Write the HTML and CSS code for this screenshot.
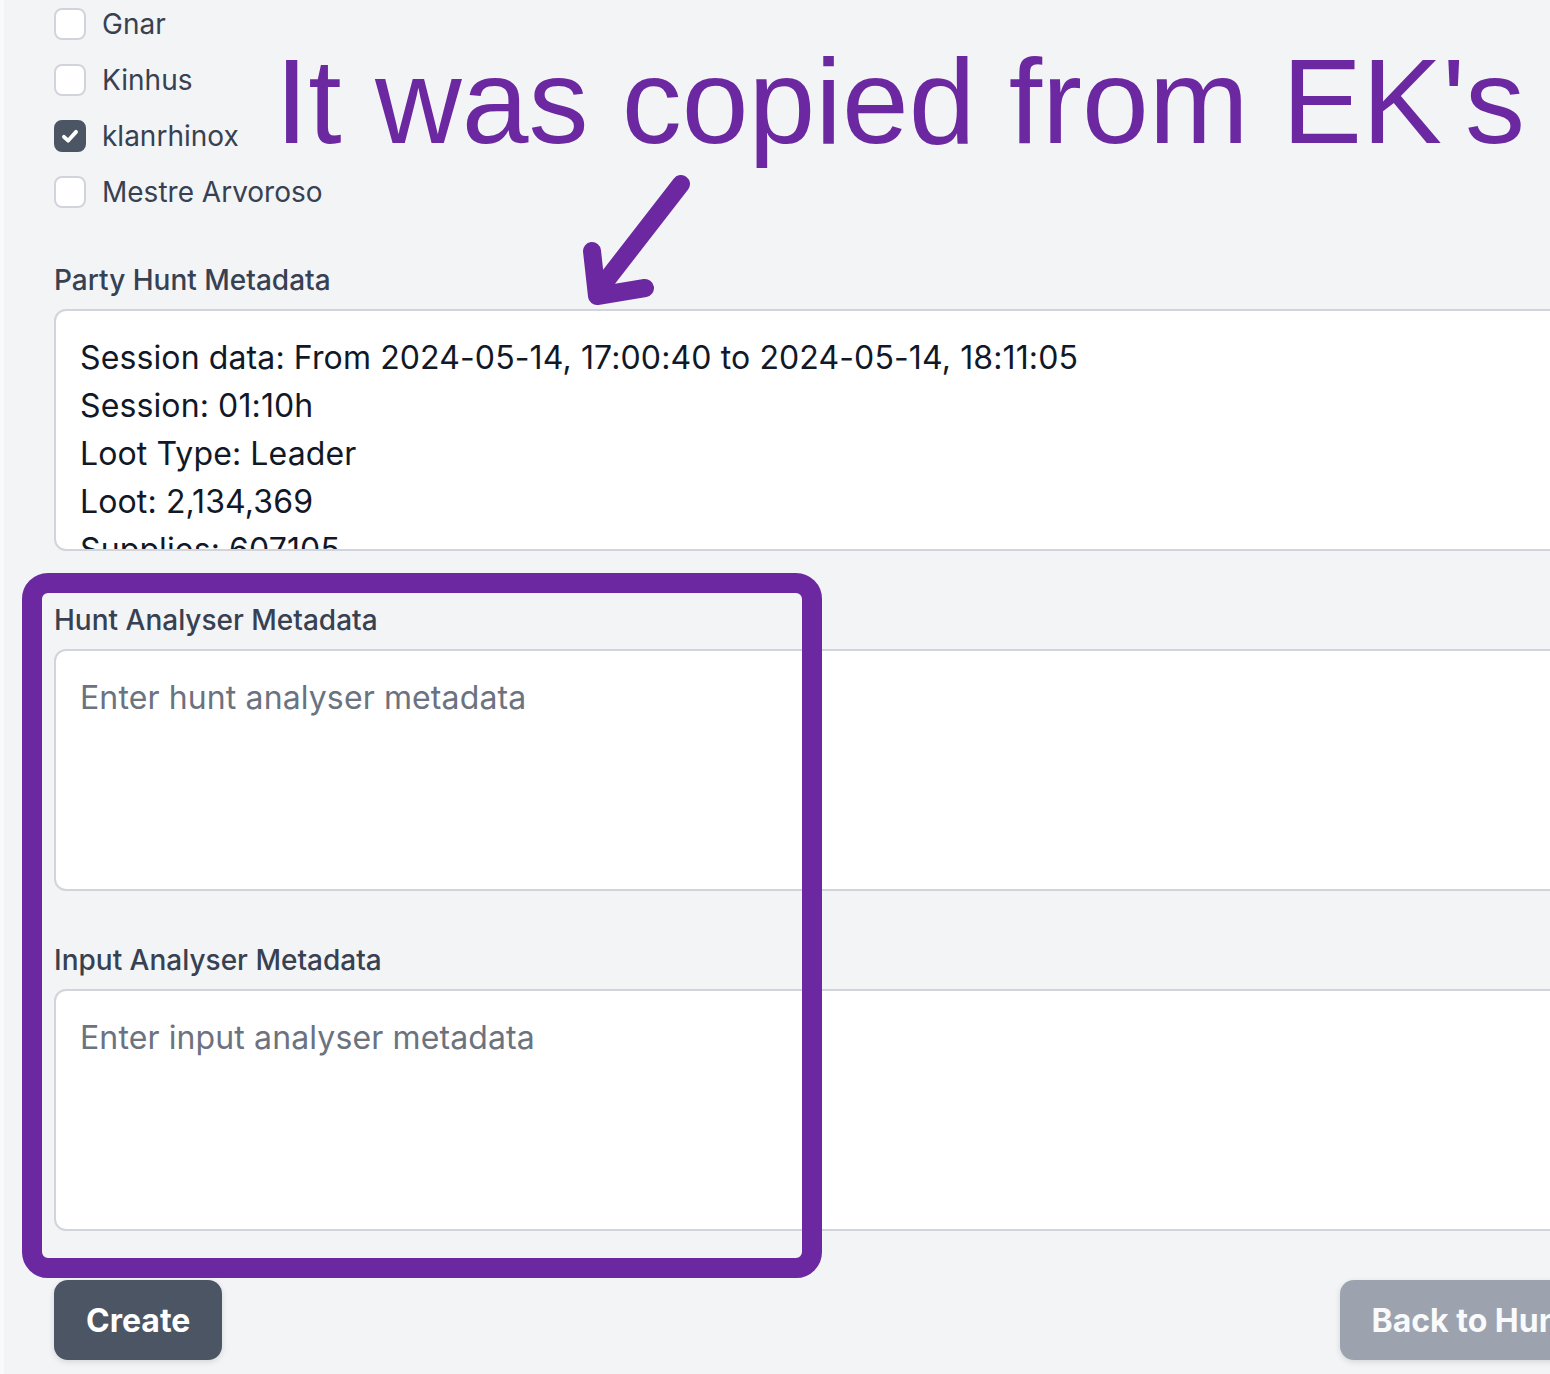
FILE: index.html
```html
<!DOCTYPE html>
<html lang="en">
<head>
<meta charset="utf-8">
<title>Create Hunt</title>
<link rel="stylesheet" href="styles.css">
</head>
<body>
<div class="page">
  <form class="form">
    <div class="checks">
      <label class="check"><span class="box"></span><span class="check-label">Gnar</span></label>
      <label class="check"><span class="box"></span><span class="check-label">Kinhus</span></label>
      <label class="check"><span class="box box-on"><svg viewBox="0 0 16 16" width="22" height="22"><path d="M3.6 8.6 L6.6 11.4 L12.4 5" fill="none" stroke="#fff" stroke-width="2.8" stroke-linecap="round" stroke-linejoin="round"/></svg></span><span class="check-label">klanrhinox</span></label>
      <label class="check"><span class="box"></span><span class="check-label">Mestre Arvoroso</span></label>
    </div>

    <div class="field field-first">
      <label class="field-label">Party Hunt Metadata</label>
      <textarea class="area">Session data: From 2024-05-14, 17:00:40 to 2024-05-14, 18:11:05
Session: 01:10h
Loot Type: Leader
Loot: 2,134,369
Supplies: 607105
Balance: 1,527,264</textarea>
    </div>

    <div class="field">
      <label class="field-label">Hunt Analyser Metadata</label>
      <textarea class="area" placeholder="Enter hunt analyser metadata"></textarea>
    </div>

    <div class="field">
      <label class="field-label">Input Analyser Metadata</label>
      <textarea class="area" placeholder="Enter input analyser metadata"></textarea>
    </div>

    <div class="actions">
      <button type="button" class="btn btn-primary">Create</button>
      <button type="button" class="btn btn-muted">Back to Hunts</button>
    </div>
  </form>

  <div class="note-text">It was copied from EK's</div>
  <svg class="note-arrow" width="140" height="150" viewBox="560 170 140 150">
    <path d="M681 184 L598 291 M592 251 L597 296 L645 288" fill="none" stroke="#6b28a1" stroke-width="18" stroke-linecap="round" stroke-linejoin="round"/>
  </svg>
  <div class="note-frame"></div>
</div>
</body>
</html>
```

FILE: styles.css
```css
html, body {
  margin: 0;
  padding: 0;
  overflow: hidden;
  background: #f9fafb;
}

.page {
  position: relative;
  margin-left: 4px;
  padding: 8px 0 40px 50px;
  background: #f3f4f6;
  min-height: 1374px;
  box-sizing: border-box;
  font-family: Inter, "Liberation Sans", sans-serif;
  color: #374151;
}

.form {
  width: 1566px;
}

.checks {
  display: flex;
  flex-direction: column;
  gap: 24px;
}

.check {
  display: flex;
  align-items: center;
  gap: 16px;
  height: 32px;
}

.box {
  width: 32px;
  height: 32px;
  box-sizing: border-box;
  border: 2px solid #d1d5db;
  border-radius: 8px;
  background: #ffffff;
  display: flex;
  align-items: center;
  justify-content: center;
}

.box-on {
  background: #4b5563;
  border-color: #4b5563;
}

.check-label {
  font-size: 28px;
  line-height: 40px;
  color: #374151;
}

.field {
  margin-top: 49px;
}

.field-first {
  margin-top: 52px;
}

.field-label {
  display: block;
  font-size: 28px;
  line-height: 40px;
  font-weight: 500;
  color: #374151;
  margin-bottom: 9px;
}

.area {
  display: block;
  width: 100%;
  height: 242px;
  box-sizing: border-box;
  border: 2px solid #d1d5db;
  border-radius: 12px;
  background: #ffffff;
  padding: 23px 24px 21px;
  font-family: Inter, "Liberation Sans", sans-serif;
  font-size: 32px;
  line-height: 48px;
  letter-spacing: 0.12px;
  color: #111827;
  resize: none;
  overflow: hidden;
  outline: none;
}

.area::placeholder {
  color: #6b7280;
}

.actions {
  margin-top: 49px;
  display: flex;
  justify-content: space-between;
}

.btn {
  height: 80px;
  padding: 0 32px;
  border: none;
  border-radius: 14px;
  font-family: Inter, "Liberation Sans", sans-serif;
  font-size: 32px;
  font-weight: 700;
  color: #ffffff;
  box-shadow: 0 2px 6px rgba(0, 0, 0, 0.12);
}

.btn-primary {
  background: #4b5563;
}

.btn-muted {
  background: #9ca3af;
  color: #f9fafb;
}

.note-text {
  position: absolute;
  left: 271px;
  top: 41px;
  font-family: "Liberation Sans", Arial, sans-serif;
  font-size: 120px;
  line-height: 1;
  color: #6b28a1;
  white-space: nowrap;
}

.note-arrow {
  position: absolute;
  left: 556px;
  top: 170px;
}

.note-frame {
  position: absolute;
  left: 18px;
  top: 573px;
  width: 800px;
  height: 705px;
  box-sizing: border-box;
  border: 20px solid #6b28a1;
  border-radius: 26px;
}
```
